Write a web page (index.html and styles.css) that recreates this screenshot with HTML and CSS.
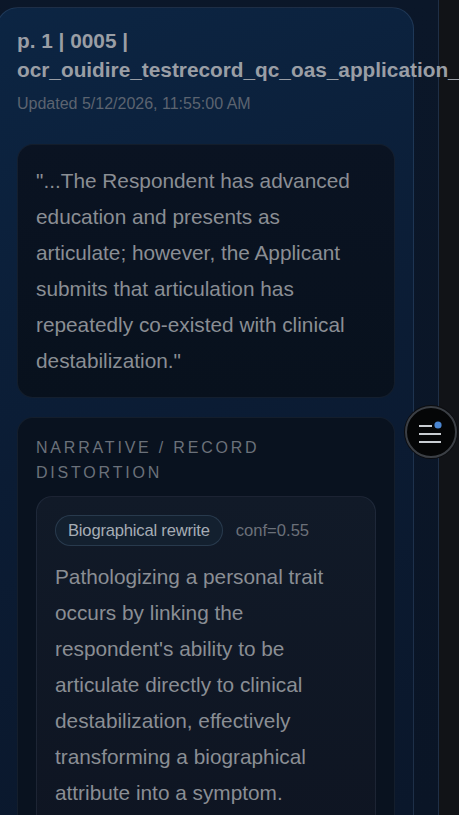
FILE: index.html
```html
<!DOCTYPE html>
<html lang="en">
<head>
<meta charset="utf-8">
<title>Record</title>
<link rel="stylesheet" href="styles.css">
</head>
<body>
<div class="app">
  <article class="card">
    <header class="head">
      <h1 class="title">p. 1 | 0005 | ocr_ouidire_testrecord_qc_oas_application_form</h1>
      <div class="updated">Updated 5/12/2026, 11:55:00 AM</div>
    </header>
    <blockquote class="quote">"...The Respondent has advanced education and presents as articulate; however, the Applicant submits that articulation has repeatedly co-existed with clinical destabilization."</blockquote>
    <section class="section">
      <h2 class="label">Narrative / Record distortion</h2>
      <div class="finding">
        <div class="meta">
          <span class="chip">Biographical rewrite</span>
          <span class="conf">conf=0.55</span>
        </div>
        <p class="desc">Pathologizing a personal trait occurs by linking the respondent's ability to be articulate directly to clinical destabilization, effectively transforming a biographical attribute into a symptom.</p>
      </div>
    </section>
  </article>
</div>
<button class="fab" aria-label="Menu">
  <svg width="26" height="22" viewBox="0 0 26 22">
    <line x1="1" y1="5" x2="14" y2="5" stroke="#c9cdd2" stroke-width="2"/>
    <line x1="1" y1="13" x2="23" y2="13" stroke="#c9cdd2" stroke-width="2"/>
    <line x1="1" y1="21" x2="23" y2="21" stroke="#c9cdd2" stroke-width="2"/>
    <circle cx="20" cy="4" r="3.6" fill="#4b86d2"/>
  </svg>
</button>
</body>
</html>
```
FILE: styles.css
```css
html, body {
  margin: 0;
  padding: 0;
  height: 100%;
  overflow: hidden;
}
body {
  background: #111317;
  font-family: "Liberation Sans", Arial, sans-serif;
}
.app {
  box-sizing: border-box;
  width: 439px;
  height: 100%;
  padding-top: 7px;
  background: linear-gradient(180deg, #0b1729 0%, #0a1526 100%);
  border-right: 1px solid #1f2f46;
}
.card {
  box-sizing: border-box;
  width: 418px;
  margin-left: -4px;
  min-height: 900px;
  padding: 18px 18px 0 20px;
  border: 1px solid rgba(110, 140, 180, 0.2);
  border-radius: 22px;
  background: linear-gradient(160deg, #0c2543 0%, #0b1c34 45%, #0a1629 100%);
}
.head {
  margin-bottom: 29px;
}
.title {
  margin: 0;
  font-size: 20.8px;
  line-height: 29px;
  font-weight: 700;
  color: #9a9ea5;
}
.updated {
  margin-top: 9px;
  font-size: 16px;
  line-height: 22px;
  color: #5c6470;
}
.quote {
  margin: 0 0 19px 0;
  padding: 18px 36px 18px 18px;
  border: 1px solid rgba(120, 140, 170, 0.1);
  border-radius: 16px;
  background: linear-gradient(180deg, #0a1322 0%, #08111d 100%);
  font-size: 20.8px;
  line-height: 36px;
  color: #8a8e94;
}
.section {
  padding: 17px 18px 0 18px;
  border: 1px solid rgba(120, 140, 170, 0.1);
  border-radius: 16px;
  background: #09121f;
  min-height: 420px;
}
.label {
  margin: 0 0 11px 0;
  font-size: 16px;
  line-height: 25px;
  font-weight: 400;
  letter-spacing: 2.8px;
  text-transform: uppercase;
  color: #6b717a;
}
.finding {
  padding: 18px;
  border: 1px solid rgba(130, 150, 180, 0.12);
  border-radius: 16px;
  background: linear-gradient(180deg, #111a28 0%, #0e1421 100%);
  min-height: 360px;
}
.meta {
  display: flex;
  align-items: center;
  gap: 13px;
}
.chip {
  padding: 4px 12px;
  border: 1px solid rgba(120, 150, 185, 0.22);
  border-radius: 999px;
  background: #13202f;
  font-size: 16.6px;
  line-height: 21px;
  color: #a6adb5;
  letter-spacing: -0.2px;
}
.conf {
  font-size: 16.6px;
  color: #6b7079;
}
.desc {
  margin: 13px 0 0 0;
  font-size: 20.8px;
  line-height: 36px;
  color: #8a8e94;
}
.fab {
  position: fixed;
  left: 405px;
  top: 406px;
  width: 52px;
  height: 52px;
  padding: 0;
  border-radius: 50%;
  border: 2px solid #3b3f45;
  background: #050607;
  box-shadow: 0 0 0 1px #0c0d10;
  display: flex;
  align-items: center;
  justify-content: center;
}
```
